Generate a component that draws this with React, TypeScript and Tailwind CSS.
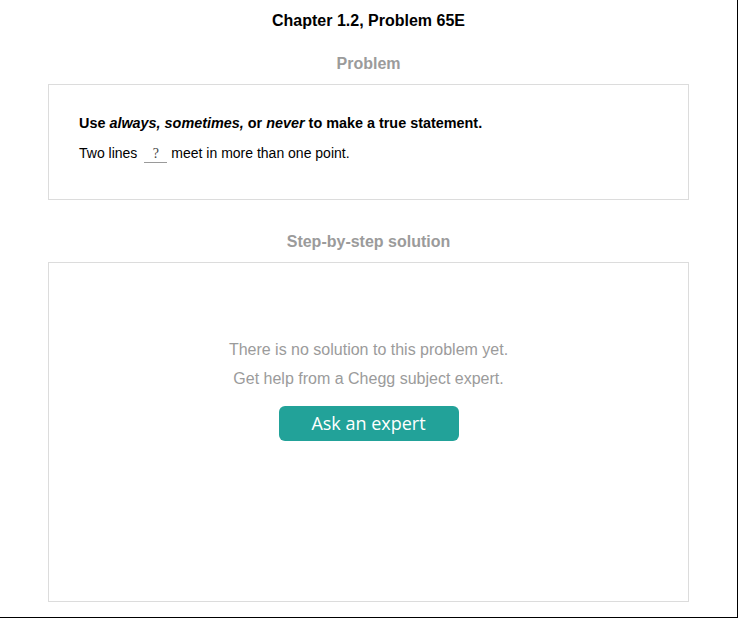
import React from "react";

export default function App() {
  return (
    <div className="w-[738px] h-[619px] bg-white">
      <div
        className="w-[738px] h-[618px] border-r border-b border-black px-[48px] pr-[48px] bg-white"
        style={{ fontFamily: '"Liberation Sans", Arial, sans-serif' }}
      >
        <div className="pt-[12px] h-[18px] box-content text-center text-[16px] leading-[18px] font-bold text-black">
          Chapter 1.2, Problem 65E
        </div>
        <div className="mt-[25px] text-center text-[16px] leading-[18px] font-bold text-[#9b9b9b]">
          Problem
        </div>
        <div className="mt-[11px] h-[116px] border border-[#dcdcdc] pl-[30px] pt-[28px]">
          <div className="text-[14.4px] leading-[20px] font-bold text-black">
            Use <i>always, sometimes,</i> or <i>never</i> to make a true statement.
          </div>
          <div className="mt-[10px] text-[14px] leading-[20px] text-black flex items-end">
            <span>Two lines</span>
            <span
              className="inline-block w-[23px] ml-[7px] mr-[4px] h-[17px] border-b border-[#9a9a9a] text-center text-[14px] leading-[15px] text-[#444]"
              style={{ fontFamily: '"Liberation Serif", serif' }}
            >
              ?
            </span>
            <span>meet in more than one point.</span>
          </div>
        </div>
        <div className="mt-[33px] text-center text-[16px] leading-[18px] font-bold text-[#9b9b9b]">
          Step-by-step solution
        </div>
        <div className="mt-[11px] h-[340px] border border-[#dcdcdc] flex flex-col items-center pt-[75px]">
          <div className="text-[16px] leading-[24px] text-[#9b9b9b]">
            There is no solution to this problem yet.
          </div>
          <div className="mt-[5px] text-[16px] leading-[24px] text-[#9b9b9b]">
            Get help from a Chegg subject expert.
          </div>
          <button
            className="mt-[15px] w-[180px] h-[35px] rounded-[6px] bg-[#22a299] text-white text-[18px] leading-[35px]"
            style={{ fontFamily: '"Open Sans", sans-serif' }}
          >
            Ask an expert
          </button>
        </div>
      </div>
    </div>
  );
}
